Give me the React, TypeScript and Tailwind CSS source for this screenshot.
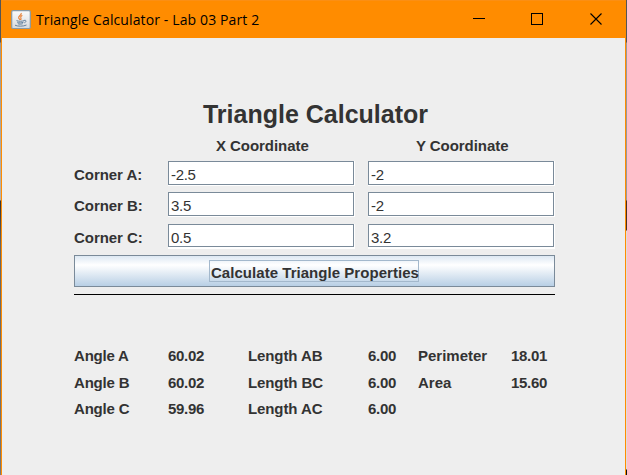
import React from "react";

function JavaIcon() {
  return (
    <svg width="20" height="20" viewBox="0 0 20 20" className="shrink-0">
      <defs>
        <linearGradient id="tile" x1="0" y1="0" x2="0" y2="1">
          <stop offset="0" stopColor="#fbfbfb" />
          <stop offset="1" stopColor="#d5d9dd" />
        </linearGradient>
      </defs>
      <rect x="0.7" y="0.7" width="18.600" height="17.800" rx="1.2" fill="url(#tile)" stroke="#8799a6" strokeWidth="1.2" />
      <path d="M10.200 3c.8 2.200-3 2.800-2.500 4.800.2.900 1.100 1.400 1.300 2.200M11.300 5.200c-1.200.7-2 1.500-1.500 2.500.4.700.4 1.400-.2 2.100" fill="none" stroke="#e8833a" strokeWidth="1.200" />
      <path d="M5.500 10.600c2 .9 5.600.9 7.600 0M6.200 12.200c1.600.9 4.400.9 6.300 0M6.800 13.700c1.500.6 3.500.6 5 0M13 10.400c2.800-.8 2.400 1.900.3 2.400M4 15.200c2.500 1.300 8.500 1.300 11.500-.2" fill="none" stroke="#64829f" strokeWidth="1" />
    </svg>
  );
}

function Field({ value, short }: { value: string; short?: boolean }) {
  return (
    <div className={`w-[187px] self-start border-r border-white ${short ? "border-b-2" : "border-b"}`}>
      <input
        readOnly
        value={value}
        className={`block w-full border border-[#7a8a99] bg-white px-[2px] pt-[3px] text-[15px] font-normal tracking-[-0.3px] text-[#333333] outline-none ${short ? "h-[23px]" : "h-6"}`}
      />
    </div>
  );
}

function CornerRow({ label, x, y, className, short }: { label: string; x: string; y: string; className: string; short?: boolean }) {
  return (
    <div className={`flex ${className}`}>
      <div className="w-[94px] pt-[5px] leading-[18px] tracking-[-0.05px]">{label}</div>
      <Field value={x} short={short} />
      <div className="w-[13px]" />
      <Field value={y} short={short} />
    </div>
  );
}

const results = [
  ["Angle A", "60.02", "Length AB", "6.00", "Perimeter", "18.01"],
  ["Angle B", "60.02", "Length BC", "6.00", "Area", "15.60"],
  ["Angle C", "59.96", "Length AC", "6.00", "", ""],
];

export default function App() {
  return (
    <div className="flex h-[475px] w-[627px] overflow-hidden bg-[#eeeeee]">
      <div className="w-px shrink-0 bg-[linear-gradient(#555_0px,#555_42px,#999_43px,#b5b5b5_200px,#333_201px,#666_245px,#777_100%)]" />
      <div className="flex w-[625px] shrink-0 flex-col border-x border-[#ff8c00]">
        <header className="flex h-[38px] shrink-0 items-center border-t border-[#fb8f14] bg-[#ff8c00] pl-[9px]">
          <JavaIcon />
          <div className="ml-[5px] w-[430px] whitespace-nowrap pt-px font-['Open_Sans','Noto_Sans',sans-serif] text-[14px] leading-5 tracking-[0.12px] text-black">
            Triangle Calculator - Lab 03 Part 2
          </div>
          <svg width="132" height="13" viewBox="0 0 132 13" fill="none" stroke="black" strokeWidth="1" className="ml-[7px] shrink-0">
            <path d="M0 5.500h12M58.500 0.500h11v11h-11z" shapeRendering="crispEdges" />
            <path d="M117.500 0.500l11 11M128.500 0.500l-11 11" strokeWidth="1.100" />
          </svg>
        </header>
        <main className="ml-[72px] w-[481px] pt-[61px] font-['Liberation_Sans',Arial,sans-serif] text-[15px] font-bold text-[#333333]">
          <h1 className="h-[38px] pl-[2px] text-center text-[25px] leading-[30px]">Triangle Calculator</h1>
          <div className="flex h-6 pl-[94px] leading-[18px] tracking-[-0.05px]">
            <div className="w-[200px] pl-[48px]">X Coordinate</div>
            <div className="pl-[48px]">Y Coordinate</div>
          </div>
          <CornerRow label="Corner A:" x="-2.5" y="-2" className="h-[31px]" />
          <CornerRow label="Corner B:" x="3.5" y="-2" className="h-8" />
          <CornerRow label="Corner C:" x="0.5" y="3.2" short className="h-[31px]" />
          <button className="flex h-8 w-full border border-[#7a8a99] bg-[linear-gradient(#dde8f3_0%,#ffffff_30%,#b8cfe5_100%)] pl-[134px] pt-[4px]">
            <span className="h-[22px] w-[210px] whitespace-nowrap border border-[#a3b8cc] pl-px text-left leading-[23px] tracking-[0.04px]">Calculate Triangle Properties</span>
          </button>
          <div className="mt-[7px] h-px bg-black" />
          <div className="mt-[52px] grid grid-cols-[94px_80px_120px_50px_93px_44px] leading-[18px]">
            {results.map((row, r) => (
              <React.Fragment key={r}>
                {row.map((text, c) => (
                  <div
                    key={c}
                    className={`whitespace-nowrap ${r === 0 ? "h-[27px]" : "h-[26px]"} ${c % 2 ? "tracking-[-0.3px]" : c === 0 ? "tracking-[-0.2px]" : c === 2 ? "tracking-[-0.1px]" : ""}`}
                  >
                    {text}
                  </div>
                ))}
              </React.Fragment>
            ))}
          </div>
        </main>
      </div>
      <div className="w-px shrink-0 bg-[linear-gradient(#555_0px,#555_42px,#999_43px,#999_200px,#4a3020_201px,#4a3020_230px,#ddd_231px,#ddd_469px,#111_470px)]" />
    </div>
  );
}
